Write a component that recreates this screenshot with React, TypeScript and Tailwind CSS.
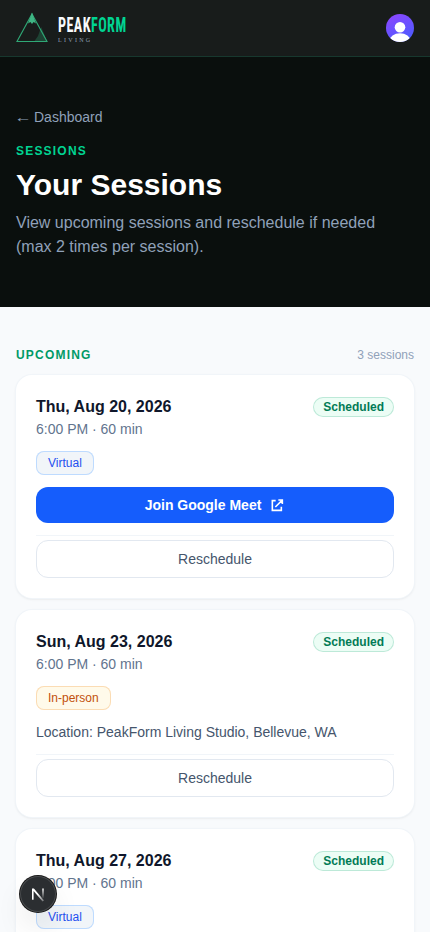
import { clsx } from "clsx";

type Session = {
  date: string;
  time: string;
  type: "Virtual" | "In-person";
  location?: string;
};

const sessions: Session[] = [
  { date: "Thu, Aug 20, 2026", time: "6:00 PM · 60 min", type: "Virtual" },
  {
    date: "Sun, Aug 23, 2026",
    time: "6:00 PM · 60 min",
    type: "In-person",
    location: "PeakForm Living Studio, Bellevue, WA",
  },
  { date: "Thu, Aug 27, 2026", time: "6:00 PM · 60 min", type: "Virtual" },
];

const Logo = () => (
  <div className="flex items-center gap-2.5">
    <svg width="32" height="32" viewBox="0 0 32 32" fill="none" aria-hidden="true">
      <path d="M16 2 L31 29.5 H1 Z" stroke="#2fa876" strokeWidth="1.1" />
      <path d="M16 0.5 L20 11.5 L17.6 10 L16 12 L14.4 10 L12 11.5 Z" fill="#3fb584" />
      <path d="M25.2 15 L31 29 H18.5 L22 24 Z" fill="#2fa876" fillOpacity="0.28" />
    </svg>
    <div className="flex w-20 flex-col pt-px">
      <span className="w-max origin-left scale-x-[0.725] font-['Roboto',sans-serif] text-[19.5px] leading-[22px] font-bold tracking-[0.6px] text-slate-50 [font-stretch:75%]">
        PEAK<span className="text-[#00d492]">FORM</span>
      </span>
      <span className="font-['Liberation_Serif',serif] text-[6px] leading-[6px] tracking-[2.3px] text-slate-400">
        LIVING
      </span>
    </div>
  </div>
);

const Avatar = () => (
  <svg width="28" height="28" viewBox="0 0 28 28" aria-label="Account">
    <defs>
      <linearGradient id="avatar" x1="6" y1="0" x2="20" y2="28" gradientUnits="userSpaceOnUse">
        <stop stopColor="#8b46ff" />
        <stop offset="1" stopColor="#4a5cff" />
      </linearGradient>
      <clipPath id="avatar-clip">
        <circle cx="14" cy="14" r="14" />
      </clipPath>
    </defs>
    <g clipPath="url(#avatar-clip)">
      <rect width="28" height="28" fill="url(#avatar)" />
      <circle cx="14" cy="13.2" r="5.3" fill="#fff" />
      <ellipse cx="14" cy="26.8" rx="10.5" ry="7.6" fill="#fff" />
    </g>
  </svg>
);

const ExternalLinkIcon = () => (
  <svg className="size-4" viewBox="0 0 24 24" fill="none" stroke="currentColor" strokeWidth="2.4">
    <path d="M10 5.5H5V20H18.5V14.5M14 4.5h6v6M19.5 5L9.5 15" />
  </svg>
);

const SessionCard = ({ session }: { session: Session }) => (
  <article className="rounded-2xl bg-white p-5 shadow-sm ring-1 ring-slate-100">
    <div className="flex items-center justify-between">
      <h3 className="text-base font-bold text-slate-900">{session.date}</h3>
      <span className="rounded-full bg-emerald-50 px-2.5 py-0.5 text-xs font-bold text-emerald-700 ring-1 ring-emerald-600/20 ring-inset">
        Scheduled
      </span>
    </div>
    <p className="text-sm text-slate-500">{session.time}</p>
    <div className="mt-3 flex">
      <span
        className={clsx(
          "rounded-lg px-3 py-1 text-xs ring-1 ring-inset",
          session.type === "Virtual"
            ? "bg-slate-100 text-[#1f4ff0] ring-blue-200"
            : "bg-[#fffaea] text-[#c2500a] ring-[#fbdcb4]"
        )}
      >
        {session.type}
      </span>
    </div>
    {session.location ? (
      <p className="mt-3 text-sm text-slate-600">Location: {session.location}</p>
    ) : (
      <button className="mt-3 flex h-9 w-full items-center justify-center gap-2 rounded-xl bg-[#155dfc] text-sm font-bold text-white">
        Join Google Meet
        <ExternalLinkIcon />
      </button>
    )}
    <div className="mt-3 border-t border-slate-100 pt-1">
      <button className="block h-[38px] w-full rounded-xl border border-slate-200 text-sm text-slate-600">
        Reschedule
      </button>
    </div>
  </article>
);

const DevBadge = () => (
  <div className="fixed bottom-5 left-5 size-9 rounded-full bg-[#2b2e31] shadow-[0_0_0_1px_#171717,inset_0_0_0_1px_rgba(255,255,255,0.14),0_16px_32px_-8px_rgba(0,0,0,0.24)]">
    <svg width="36" height="36" viewBox="0 0 36 36" fill="none">
      <defs>
        <linearGradient id="n-diagonal" x1="18" y1="18" x2="24" y2="25" gradientUnits="userSpaceOnUse">
          <stop stopColor="#fff" />
          <stop offset="1" stopColor="#fff" stopOpacity="0.3" />
        </linearGradient>
        <linearGradient id="n-stem" x1="0" y1="12" x2="0" y2="23" gradientUnits="userSpaceOnUse">
          <stop stopColor="#fff" />
          <stop offset="1" stopColor="#fff" stopOpacity="0" />
        </linearGradient>
      </defs>
      <path d="M12 12.5h1.9L24 24.4l-1.4 1L13.6 15v8.8H12Z" fill="url(#n-diagonal)" />
      <path d="M22.2 12.5h1.6v9.5h-1.6Z" fill="url(#n-stem)" />
    </svg>
  </div>
);

const App = () => {
  return (
    <div className="h-screen overflow-hidden bg-slate-50 font-['Liberation_Sans',Arial,sans-serif] antialiased">
      <header className="flex h-[57px] items-center justify-between border-b border-[#17382e] bg-[#181c1b] px-4">
        <Logo />
        <Avatar />
      </header>

      <section className="bg-[#0a0f0d] px-4 pt-[50px] pb-12">
        <a href="#" className="flex h-5 items-center gap-1 text-sm text-slate-400">
          <span className="w-3.5 scale-x-125 pt-0.5 text-center font-['Liberation_Serif',serif]">←</span>
          Dashboard
        </a>
        <p className="mt-4 text-xs font-bold tracking-widest text-[#00d492]">SESSIONS</p>
        <h1 className="mt-2 text-3xl font-bold text-white">Your Sessions</h1>
        <p className="mt-2 text-base text-slate-400">
          View upcoming sessions and reschedule if needed (max 2 times per session).
        </p>
      </section>

      <main className="px-4 pt-10">
        <div className="flex items-center justify-between">
          <h2 className="text-xs font-bold tracking-widest text-emerald-600">UPCOMING</h2>
          <span className="text-xs text-slate-400">{sessions.length} sessions</span>
        </div>
        <div className="mt-3 flex flex-col gap-3">
          {sessions.map((session) => (
            <SessionCard key={session.date} session={session} />
          ))}
        </div>
      </main>

      <DevBadge />
    </div>
  );
};

export default App;
